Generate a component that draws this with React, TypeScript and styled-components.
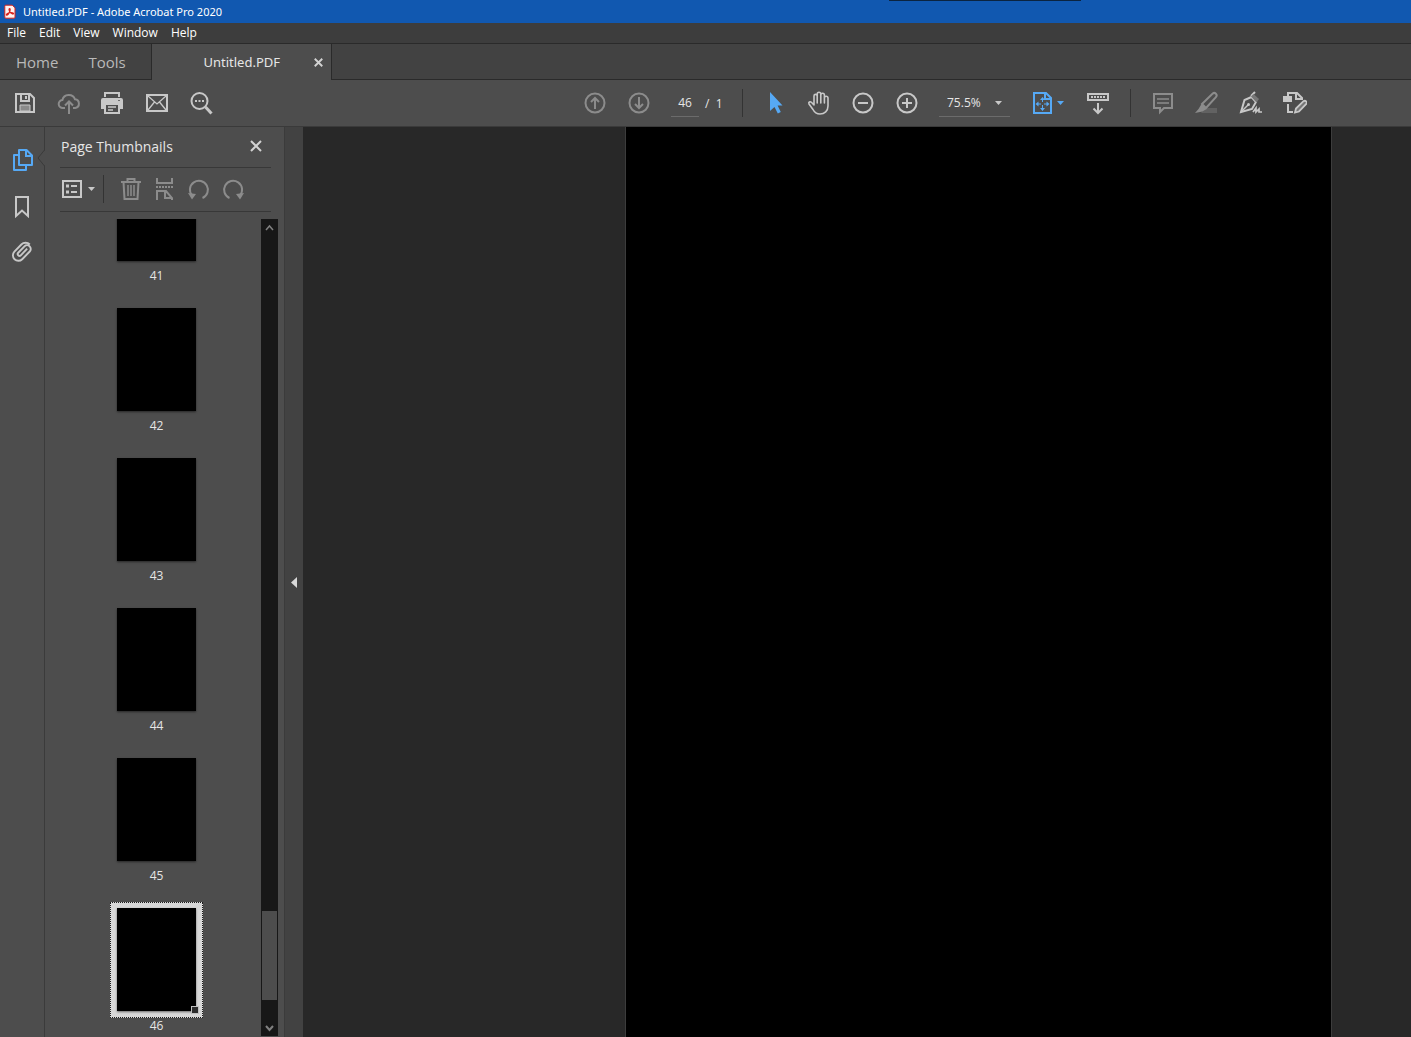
import React from "react";
import styled, { createGlobalStyle, css } from "styled-components";

const color = {
  title: "#1158b0",
  menu: "#3d3d3d",
  tabs: "#424242",
  chrome: "#4d4d4d",
  line: "#333333",
  canvas: "#282828",
  icon: "#c8c8c8",
  dim: "#8c8c8c",
  accent: "#56a9f5",
  text: "#e6e6e6",
};

const GlobalStyle = createGlobalStyle`
  *, *::before, *::after { box-sizing: border-box; }
  body { margin: 0; background: ${color.canvas}; }
  body, button, input, select {
    font-family: "Open Sans", "Noto Sans", sans-serif;
    font-size: 12px;
    color: ${color.text};
  }
  button, input, select { margin: 0; padding: 0; border: 0; background: none; outline: none; }
`;

const Window = styled.div`
  display: flex;
  flex-direction: column;
  height: 100vh;
  overflow: hidden;
  background: ${color.chrome};
`;

const TitleBar = styled.header`
  position: relative;
  display: flex;
  align-items: center;
  gap: 7px;
  flex: none;
  height: 23px;
  padding-left: 4px;
  background: ${color.title};
  color: #fff;
  font-family: "Noto Sans", sans-serif;
  font-size: 11px;
`;

const TitleEdge = styled.span`
  position: absolute;
  top: 0;
  left: 63%;
  width: 192px;
  height: 1px;
  background: #0b2440;
`;

const MenuBar = styled.nav`
  display: flex;
  align-items: center;
  gap: 13px;
  flex: none;
  height: 20px;
  padding-left: 7px;
  background: ${color.menu};
`;

const MenuItem = styled.button`
  color: #fff;
  line-height: 20px;
`;

const TabBar = styled.div`
  display: flex;
  flex: none;
  height: 37px;
  border-top: 1px solid #2a2a2a;
  background: ${color.tabs};
`;

const TabGroup = styled.div`
  display: flex;
  align-items: center;
  gap: 30px;
  width: 152px;
  padding-left: 16px;
  border-right: 1px solid #2a2a2a;
  border-bottom: 1px solid #2a2a2a;
`;

const Tab = styled.button`
  color: #b9b9b9;
  font-size: 14px;
  font-size: 15px;
  line-height: 20px;
`;

const DocumentTab = styled.div`
  display: flex;
  align-items: center;
  justify-content: flex-end;
  gap: 34px;
  width: 180px;
  padding-right: 8px;
  border-right: 1px solid #2a2a2a;
  background: ${color.chrome};
  font-family: "Noto Sans", sans-serif;
  font-size: 13px;
`;

const CloseTab = styled.button`
  display: flex;
`;

const TabRest = styled.div`
  flex: 1;
  border-bottom: 1px solid #2a2a2a;
`;

const Toolbar = styled.div`
  display: flex;
  align-items: center;
  justify-content: space-between;
  flex: none;
  height: 47px;
  padding: 0 94px 0 3px;
  border-bottom: 1px solid #3a3a3a;
`;

const ToolGroup = styled.div`
  display: flex;
  align-items: center;
`;

const ToolButton = styled.button<{ $tone?: "dim" | "accent"; $width?: number; $height?: number; $gap?: number }>`
  display: flex;
  align-items: center;
  justify-content: center;
  flex: none;
  gap: ${(p) => p.$gap ?? 0}px;
  width: ${(p) => p.$width ?? 44}px;
  height: ${(p) => p.$height ?? 44}px;
  color: ${(p) => (p.$tone ? color[p.$tone] : color.icon)};
`;

const Divider = styled.span<{ $before: number; $after: number }>`
  width: 1px;
  height: 28px;
  margin: 0 ${(p) => p.$after}px 0 ${(p) => p.$before}px;
  background: ${color.line};
`;

const field = css`
  height: 28px;
  border-bottom: 1px solid #6b6b6b;
  font-size: 12px;
`;

const PageInput = styled.input`
  ${field}
  width: 28px;
  margin: 0 6px 0 10px;
  text-align: center;
`;

const PageCount = styled.span`
  width: 37px;
  white-space: pre;
`;

const ZoomBox = styled.div`
  display: grid;
  align-items: center;
  width: 71px;
  margin: 0 13px 0 10px;
  & > * { grid-area: 1 / 1; }
  & > svg { justify-self: end; margin-right: 8px; pointer-events: none; color: ${color.icon}; }
`;

const ZoomSelect = styled.select`
  ${field}
  appearance: none;
  width: 100%;
  padding-left: 8px;
`;

const Workspace = styled.div`
  display: flex;
  flex: 1;
  min-height: 0;
`;

const Rail = styled.nav`
  position: relative;
  display: flex;
  flex-direction: column;
  flex: none;
  width: 45px;
  padding: 10px 0 0 1px;
  border-right: 1px solid #3b3b3b;
`;

const RailNotch = styled.svg`
  position: absolute;
  top: 22px;
  right: -1px;
  display: block;
`;

const Panel = styled.aside`
  display: flex;
  flex-direction: column;
  flex: none;
  width: 240px;
  border-right: 1px solid #3b3b3b;
`;

const PanelHeader = styled.div`
  display: flex;
  align-items: center;
  justify-content: space-between;
  flex: none;
  height: 41px;
  margin: 0 13px 0 15px;
  padding-bottom: 2px;
  border-bottom: 1px solid #383838;
`;

const PanelTitle = styled.h2`
  margin: 0;
  padding-left: 1px;
  font-size: 14px;
  font-weight: 400;
`;

const PanelTools = styled.div`
  display: flex;
  align-items: center;
  flex: none;
  height: 44px;
  margin: 0 13px 0 15px;
  padding-bottom: 1px;
  border-bottom: 1px solid #383838;
`;

const PanelBody = styled.div`
  display: flex;
  flex: 1;
  min-height: 0;
  padding: 7px 6px 1px 7px;
`;

const ThumbList = styled.ol`
  display: flex;
  flex: 1;
  flex-direction: column;
  align-items: center;
  justify-content: flex-end;
  gap: 18px;
  margin: 0;
  padding: 0 0 2px;
  overflow: hidden;
  list-style: none;
`;

const ThumbItem = styled.li`
  display: flex;
  flex: none;
  flex-direction: column;
  align-items: center;
  line-height: 16px;
`;

const ThumbFrame = styled.button<{ $selected: boolean }>`
  position: relative;
  display: block;
  width: 93px;
  height: 116px;
  padding: 5px 6px 6px;
  border: 1px dotted ${(p) => (p.$selected ? "#1c1c1c" : "transparent")};
  background: ${(p) => (p.$selected ? "#d8d8d8" : "transparent")};
`;

const ThumbPage = styled.span`
  display: block;
  height: 103px;
  background: #000;
  box-shadow: 0 1px 2px rgba(0, 0, 0, 0.5);
`;

const ResizeGrip = styled.span`
  position: absolute;
  right: 3px;
  bottom: 3px;
  width: 8px;
  height: 8px;
  border: 1px solid #c0c0c0;
  background: #2c2c2c;
`;

const Scrollbar = styled.div`
  display: flex;
  flex-direction: column;
  flex: none;
  width: 17px;
  background: #171717;
`;

const ScrollTrack = styled.div`
  display: grid;
  flex: 1;
  grid-template-rows: 674fr 89fr 19fr;
  padding: 0 1px;
`;

const ScrollThumb = styled.div`
  grid-row: 2;
  background: #4d4d4d;
`;

const Gutter = styled.button`
  display: flex;
  align-items: center;
  justify-content: center;
  flex: none;
  width: 18px;
  background: #424242;
`;

const Canvas = styled.main`
  display: flex;
  flex: 1;
  justify-content: flex-end;
  min-width: 0;
  padding: 0 79px 0 0;
  background: ${color.canvas};
`;

const PageView = styled.section`
  width: 707px;
  max-width: 100%;
  border: solid #3c3c3c;
  border-width: 0 1px;
  background: #000;
`;

type IconProps = { children: React.ReactNode; size?: number; stroke?: number };

const Icon = ({ children, size = 24, stroke = 2 }: IconProps) => (
  <svg width={size} height={size} viewBox={`0 0 ${size} ${size}`} fill="none" stroke="currentColor" strokeWidth={stroke} aria-hidden="true">
    {children}
  </svg>
);

const Caret = () => (
  <svg width="7" height="4" viewBox="0 0 7 4" fill="currentColor" aria-hidden="true">
    <path d="M0 0h7L3.500 4z" />
  </svg>
);

const Cross = ({ size, stroke }: { size: number; stroke: number }) => (
  <svg width={size} height={size} viewBox="0 0 12 12" stroke="#d2d2d2" strokeWidth={stroke} aria-hidden="true">
    <path d="M1 1l10 10M11 1L1 11" />
  </svg>
);

const AcrobatLogo = () => (
  <svg width="12" height="16" viewBox="0 0 12 16" aria-hidden="true">
    <path d="M1.800 1.200h6.400l2.800 2.600v9.400a1 1 0 0 1-1 1H1.800a1 1 0 0 1-1-1v-11a1 1 0 0 1 1-1z" fill="#fdf3f1" stroke="#d9231c" strokeWidth="1" />
    <path d="M5.600 4.600c1 0 .6 2.400-.6 4.400-.8 1.500-2 2.600-2.500 2-.6-.8 1.300-2 3.300-2.300 2-.4 4 .1 3.700 1-.3 1-2.300-.1-3.400-1.600C5 6.700 4.700 4.600 5.600 4.600z" fill="none" stroke="#d9231c" strokeWidth="1.200" />
  </svg>
);

const SaveIcon = () => (
  <Icon>
    <path d="M3 3h14l4 4v14H3z" />
    <path d="M8 3v7h8V3" />
    <path d="M13 5v3" />
    <path d="M7 14h10v6H7z" fill="#8a8a8a" strokeWidth="1" />
  </Icon>
);

const CloudIcon = () => (
  <Icon>
    <path d="M8 17H6a4 4 0 0 1-.6-8A6.600 6.600 0 0 1 18 8.300a4.400 4.400 0 0 1 .3 8.700H16" />
    <path d="M12 23V11M8 14.500l4-4 4 4" />
  </Icon>
);

const PrintIcon = () => (
  <Icon>
    <path d="M4 6V2h14v4" />
    <path d="M2 7h18a2 2 0 0 1 2 2v9h-4v-5H4v5H0V9a2 2 0 0 1 2-2z" fill="currentColor" stroke="none" />
    <path d="M4 13h14v9H4z" fill={color.chrome} />
    <path d="M7 16h8M7 19h5" strokeWidth="1.500" />
    <path d="M17 9.500h2" stroke="#6a6a6a" strokeWidth="1" />
  </Icon>
);

const MailIcon = () => (
  <Icon>
    <path d="M2 4h20v16H2z" />
    <path d="M3 5l9 8 9-8M3 19l6.500-8M21 19l-6.500-8" strokeWidth="1.300" />
  </Icon>
);

const SearchIcon = () => (
  <Icon>
    <circle cx="10.500" cy="10" r="8" />
    <path d="M16.500 16l6 6.500" strokeWidth="3" />
    <path d="M6 10h2M9.500 10h2M13 10h2" />
  </Icon>
);

const ArrowCircle = ({ down }: { down?: boolean }) => (
  <Icon>
    <circle cx="12" cy="12" r="9.500" />
    <path d={down ? "M12 6v11M8 13l4 4 4-4" : "M12 18V7M8 11l4-4 4 4"} />
  </Icon>
);

const ZoomCircle = ({ plus }: { plus?: boolean }) => (
  <Icon>
    <circle cx="12" cy="12" r="9.500" />
    <path d={plus ? "M7 12h10M12 7v10" : "M7 12h10"} />
  </Icon>
);

const CursorIcon = () => (
  <Icon>
    <path d="M7 1v19l4.500-4 3.300 6.500 3-1.500-3.200-6.500H19.500z" fill="currentColor" stroke="none" />
  </Icon>
);

const HandIcon = () => (
  <Icon>
    <path d="M7 14V5a1.600 1.600 0 0 1 3.200 0V12M10.200 12V3a1.700 1.700 0 0 1 3.600 0v9M13.800 12V4a1.700 1.700 0 0 1 3.600 0v8M17.400 12V7a1.700 1.700 0 0 1 3.600 0v8c0 5-3.500 8-8 8-3.500 0-5.500-1.500-7-4.500L2 13c-.8-1.700 1-3 2.400-1.700L7 14" strokeLinejoin="round" strokeLinecap="round" strokeWidth="1.600" />
  </Icon>
);

const FitIcon = () => (
  <Icon>
    <path d="M4 2h12l5 5v15H4z" />
    <path d="M15 2v6h6" />
    <path d="M12.500 6l2.500 3h-5zM12.500 20l2.500-3h-5zM5.500 13l3-2.500v5zM19.500 13l-3-2.500v5z" fill="currentColor" stroke="none" />
    <path d="M12.500 8v10M8 13h9" strokeWidth="1" strokeDasharray="3 3" />
  </Icon>
);

const ReadModeIcon = () => (
  <Icon>
    <path d="M2 3h20v6H2z" />
    <path d="M5 6h14" strokeDasharray="2 1" />
    <path d="M12 12v10M7.500 17.500L12 22l4.500-4.500" />
  </Icon>
);

const CommentIcon = () => (
  <Icon>
    <path d="M3 3h18v14h-8l-4 4v-4H3z" />
    <path d="M6 8h12M6 12h12" strokeWidth="1.500" />
  </Icon>
);

const HighlightIcon = () => (
  <Icon>
    <path d="M10 17h12v5H6z" fill="#626262" stroke="none" />
    <path d="M7 13L17.500 2.700c1-.9 2.500-.9 3.400 0s.9 2.400 0 3.400L11 17z" />
    <path d="M6.500 13l5 5-4 2.500L0 22l3.500-4z" fill="currentColor" stroke="none" />
  </Icon>
);

const SignIcon = () => (
  <Icon>
    <path d="M12.500 6L5.500 9 2 21l11-3 4-7z" />
    <path d="M2 21l7-7" strokeWidth="1.500" />
    <circle cx="9.500" cy="13.500" r="1.500" fill="currentColor" stroke="none" />
    <path d="M12 5l4-4" />
    <path d="M14.500 3l5.500 5-2.500 3.500-5.500-6z" fill="#777" stroke="none" />
    <path d="M14 21l3-4v4l3-3v3h3" strokeWidth="1.700" />
  </Icon>
);

const EditPdfIcon = () => (
  <Icon>
    <path d="M5 5V2h9l5 5v2M13 2v6h6M5 13v8h5" />
    <path d="M0 5h9v6H0z" fill="currentColor" stroke="none" />
    <path d="M12 21.500l1-4 7.500-7.300a2 2 0 0 1 2.800 2.800L16 20.500z" fill="#777" strokeWidth="1.800" />
  </Icon>
);

const PagesIcon = () => (
  <Icon>
    <path d="M8 2h7.500l5.500 5.500V17H8z" strokeLinejoin="round" />
    <path d="M15 2v6h6" />
    <path d="M8 7H3v15h12v-5" strokeLinejoin="round" />
  </Icon>
);

const BookmarkIcon = () => (
  <Icon>
    <path d="M5 3h12v19l-6-5.500L5 22z" />
  </Icon>
);

const ClipIcon = () => (
  <Icon>
    <path d="M17.200 8.200l-6.800 7a1.900 1.900 0 0 1-2.700-2.700l6.600-6.800a3.900 3.900 0 0 1 5.600 5.500l-8 8.200a5.800 5.800 0 0 1-8.300-8.100l7.400-7.600a6.300 6.300 0 0 1 9 0" transform="translate(0 1) scale(.94)" />
  </Icon>
);

const OptionsIcon = () => (
  <Icon size={20}>
    <path d="M1 2h18v16H1z" />
    <path d="M4 7h3M4 13h3" strokeWidth="3" />
    <path d="M9 7h6M9 13h6" />
  </Icon>
);

const TrashIcon = () => (
  <Icon>
    <path d="M2 5h20M8.500 4V2h7v2" />
    <path d="M4.500 5l1 17h13l1-17" />
    <path d="M9 8v11M12 8v11M15 8v11" strokeWidth="1.500" />
  </Icon>
);

const SplitIcon = () => (
  <Icon>
    <path d="M4 1v5h15V1" />
    <path d="M3 10h18" strokeDasharray="2 1" />
    <path d="M4 23v-9h9l6 7v2M12 15v6h7" />
  </Icon>
);

const RotateIcon = ({ right }: { right?: boolean }) => (
  <Icon>
    <g transform={right ? "translate(24 0) scale(-1 1)" : undefined}>
      <path d="M5 18.500A9 9 0 1 1 15.500 21" />
      <path d="M1 16l8 1-4 5.500z" fill="currentColor" stroke="none" />
    </g>
  </Icon>
);

const Chevron = ({ down }: { down?: boolean }) => (
  <svg width="9" height="8" viewBox="0 0 9 8" fill="none" stroke="#808080" strokeWidth={down ? 2 : 1.5} aria-hidden="true">
    <path d={down ? "M1 2l3.500 4L8 2" : "M1 6l3.500-4L8 6"} />
  </svg>
);

const menus = ["File", "Edit", "View", "Window", "Help"];
const pages = [41, 42, 43, 44, 45, 46];

export default function App() {
  return (
    <>
      <GlobalStyle />
      <Window>
        <TitleBar>
          <AcrobatLogo />
          Untitled.PDF - Adobe Acrobat Pro 2020
          <TitleEdge />
        </TitleBar>
        <MenuBar aria-label="Menu">
          {menus.map((name) => (
            <MenuItem key={name}>{name}</MenuItem>
          ))}
        </MenuBar>
        <TabBar>
          <TabGroup>
            <Tab>Home</Tab>
            <Tab>Tools</Tab>
          </TabGroup>
          <DocumentTab>
            <span>Untitled.PDF</span>
            <CloseTab aria-label="Close tab">
              <Cross size={9} stroke={2.5} />
            </CloseTab>
          </DocumentTab>
          <TabRest />
        </TabBar>
        <Toolbar>
          <ToolGroup>
            <ToolButton aria-label="Save"><SaveIcon /></ToolButton>
            <ToolButton aria-label="Upload" $tone="dim"><CloudIcon /></ToolButton>
            <ToolButton aria-label="Print"><PrintIcon /></ToolButton>
            <ToolButton aria-label="Email"><MailIcon /></ToolButton>
            <ToolButton aria-label="Search"><SearchIcon /></ToolButton>
          </ToolGroup>
          <ToolGroup>
            <ToolButton aria-label="Previous page" $tone="dim"><ArrowCircle /></ToolButton>
            <ToolButton aria-label="Next page" $tone="dim"><ArrowCircle down /></ToolButton>
            <PageInput aria-label="Page number" defaultValue="46" />
            <PageCount>/  1</PageCount>
            <Divider $before={0} $after={10} />
            <ToolButton aria-label="Select" $tone="accent"><CursorIcon /></ToolButton>
            <ToolButton aria-label="Pan"><HandIcon /></ToolButton>
            <ToolButton aria-label="Zoom out"><ZoomCircle /></ToolButton>
            <ToolButton aria-label="Zoom in"><ZoomCircle plus /></ToolButton>
            <ZoomBox>
              <ZoomSelect aria-label="Zoom level" defaultValue="75.5%">
                <option>75.5%</option>
              </ZoomSelect>
              <Caret />
            </ZoomBox>
            <ToolButton aria-label="Fit page" $tone="accent" $width={47} $gap={3}>
              <FitIcon />
              <Caret />
            </ToolButton>
            <ToolButton aria-label="Read mode" $width={56}><ReadModeIcon /></ToolButton>
            <Divider $before={4} $after={10} />
            <ToolButton aria-label="Comment" $tone="dim"><CommentIcon /></ToolButton>
            <ToolButton aria-label="Highlight" $tone="dim"><HighlightIcon /></ToolButton>
            <ToolButton aria-label="Sign"><SignIcon /></ToolButton>
            <ToolButton aria-label="Edit PDF"><EditPdfIcon /></ToolButton>
          </ToolGroup>
        </Toolbar>
        <Workspace>
          <Rail aria-label="Navigation panes">
            <ToolButton aria-label="Page thumbnails" $tone="accent" $height={46}><PagesIcon /></ToolButton>
            <ToolButton aria-label="Bookmarks" $height={46}><BookmarkIcon /></ToolButton>
            <ToolButton aria-label="Attachments" $height={46}><ClipIcon /></ToolButton>
            <RailNotch width="8" height="18" viewBox="0 0 8 18" aria-hidden="true">
              <path d="M8 1L1 9l7 8z" fill={color.chrome} />
              <path d="M7.500 1L1 9l6.500 8" fill="none" stroke="#3b3b3b" />
            </RailNotch>
          </Rail>
          <Panel>
            <PanelHeader>
              <PanelTitle>Page Thumbnails</PanelTitle>
              <ToolButton aria-label="Close panel" $width={30} $height={30}><Cross size={12} stroke={2} /></ToolButton>
            </PanelHeader>
            <PanelTools>
              <ToolButton aria-label="Options" $width={36} $gap={6}>
                <OptionsIcon />
                <Caret />
              </ToolButton>
              <Divider $before={7} $after={10} />
              <ToolButton aria-label="Delete pages" $tone="dim" $width={34}><TrashIcon /></ToolButton>
              <ToolButton aria-label="Split pages" $tone="dim" $width={34}><SplitIcon /></ToolButton>
              <ToolButton aria-label="Rotate left" $tone="dim" $width={34}><RotateIcon /></ToolButton>
              <ToolButton aria-label="Rotate right" $tone="dim" $width={34}><RotateIcon right /></ToolButton>
            </PanelTools>
            <PanelBody>
              <ThumbList>
                {pages.map((page) => (
                  <ThumbItem key={page}>
                    <ThumbFrame aria-label={`Page ${page}`} $selected={page === 46}>
                      <ThumbPage />
                      {page === 46 && <ResizeGrip />}
                    </ThumbFrame>
                    {page}
                  </ThumbItem>
                ))}
              </ThumbList>
              <Scrollbar>
                <ToolButton aria-label="Scroll up" $width={17} $height={18}><Chevron /></ToolButton>
                <ScrollTrack>
                  <ScrollThumb />
                </ScrollTrack>
                <ToolButton aria-label="Scroll down" $width={17} $height={17}><Chevron down /></ToolButton>
              </Scrollbar>
            </PanelBody>
          </Panel>
          <Gutter aria-label="Collapse panel">
            <svg width="6" height="11" viewBox="0 0 6 11" fill="#d8d8d8" aria-hidden="true">
              <path d="M6 0v11L0 5.500z" />
            </svg>
          </Gutter>
          <Canvas>
            <PageView aria-label="Document page" />
          </Canvas>
        </Workspace>
      </Window>
    </>
  );
}
